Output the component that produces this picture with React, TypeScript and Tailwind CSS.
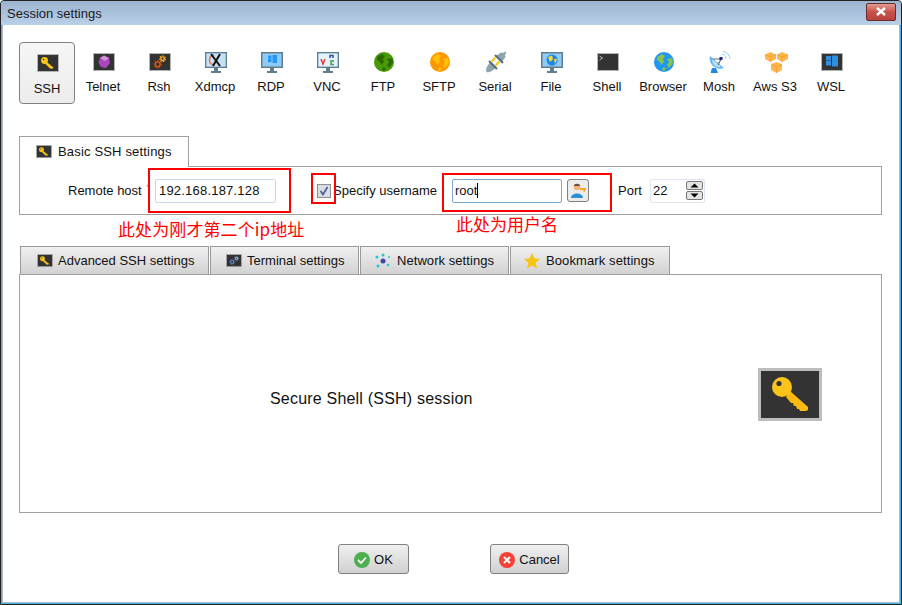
import type { ReactNode } from "react";

const FONT = "font-['Liberation_Sans',Arial,sans-serif]";

function Tile({ size = 22, children }: { size?: number; children: ReactNode }) {
  return (
    <svg width={size} height={size * 0.82} viewBox="0 0 22 18" className="block">
      <rect x="0.5" y="0.5" width="21" height="17" fill="#333" stroke="#b5b5b5" />
      {children}
    </svg>
  );
}

function KeyIcon({ size = 22 }: { size?: number }) {
  return (
    <Tile size={size}>
      <circle cx="7.5" cy="6.5" r="3.4" fill="#fcc419" />
      <circle cx="6.6" cy="5.5" r="0.8" fill="#333" />
      <path d="M9.5 7.8 L16.5 13.5 L15.5 14.8 L13 14.5 L8 9.5 Z" fill="#fcc419" />
    </Tile>
  );
}

function Monitor({ children }: { children?: ReactNode }) {
  return (
    <svg width="22" height="21" viewBox="0 0 22 21" className="block">
      <rect x="0" y="0" width="22" height="16" fill="#607d8b" />
      <rect x="1.5" y="1.5" width="19" height="13" fill="#90caf9" />
      <rect x="9" y="16" width="4" height="3" fill="#607d8b" />
      <rect x="6" y="19" width="10" height="2" fill="#607d8b" />
      {children}
    </svg>
  );
}

function WinLogo({ x, y, s, c }: { x: number; y: number; s: number; c: string }) {
  return (
    <g fill={c}>
      <rect x={x} y={y} width={s} height={s * 0.9} />
      <rect x={x + s + 1} y={y - 0.5} width={s + 1} height={s + 0.4} />
      <rect x={x} y={y + s} width={s} height={s * 0.9} />
      <rect x={x + s + 1} y={y + s} width={s + 1} height={s + 0.4} />
    </g>
  );
}

function Globe({ sea, land }: { sea: string; land: string }) {
  return (
    <svg width="20" height="20" viewBox="0 0 20 20" className="block">
      <circle cx="10" cy="10" r="10" fill={sea} />
      <path d="M3 5 L8 2 L11 4 L9 7 L10 10 L7 13 L6 10 L3 8 Z M13 7 L18 6 L19 11 L15 16 L13 13 L15 10 Z M9 15 L12 16 L10 19 L8 18 Z" fill={land} />
    </svg>
  );
}

function Gear({ cx, cy, r, c }: { cx: number; cy: number; r: number; c: string }) {
  return (
    <g fill="none" stroke={c}>
      <circle cx={cx} cy={cy} r={r} strokeWidth="1.4" />
      <circle cx={cx} cy={cy} r={r + 1.1} strokeWidth="1.1" strokeDasharray="1.3 1.3" />
    </g>
  );
}

const protocols: { name: string; icon: ReactNode }[] = [
  { name: "SSH", icon: <KeyIcon /> },
  {
    name: "Telnet",
    icon: (
      <Tile>
        <path d="M11 2.5 L16 5 L17 10 L13 15 L8 14 L5.5 9.5 L7 5 Z" fill="#ab47bc" />
        <path d="M11 2.5 L16 5 L12 8 L7 5 Z" fill="#ce93d8" />
      </Tile>
    ),
  },
  {
    name: "Rsh",
    icon: (
      <Tile>
        <Gear cx={8.7} cy={11.3} r={2.4} c="#e65100" />
        <Gear cx={13.6} cy={5.7} r={1.8} c="#f9a825" />
      </Tile>
    ),
  },
  {
    name: "Xdmcp",
    icon: (
      <Monitor>
        <rect x="1.5" y="1.5" width="19" height="13" fill="#c5e1f5" />
        <path d="M9 3 C3 4 3 12 9 13" fill="none" stroke="#e5703a" strokeWidth="1.4" />
        <path d="M6 2 L15 14 M15 2 L8 14" stroke="#111" strokeWidth="2" />
      </Monitor>
    ),
  },
  {
    name: "RDP",
    icon: (
      <Monitor>
        <WinLogo x={7} y={3.5} s={3.5} c="#2196f3" />
      </Monitor>
    ),
  },
  {
    name: "VNC",
    icon: (
      <Monitor>
        <rect x="1.5" y="1.5" width="19" height="13" fill="#e3f2fd" />
        <path d="M4 7 L6 12 L8 7" fill="none" stroke="#e53935" strokeWidth="1.5" />
        <path d="M13 6 V3.5 H16 V6" fill="none" stroke="#3949ab" strokeWidth="1.5" />
        <path d="M17 9 H14 V12.5 H17" fill="none" stroke="#43a047" strokeWidth="1.5" />
      </Monitor>
    ),
  },
  { name: "FTP", icon: <Globe sea="#4a9a05" land="#2c6a00" /> },
  { name: "SFTP", icon: <Globe sea="#ff9800" land="#ffc107" /> },
  {
    name: "Serial",
    icon: (
      <svg width="22" height="22" viewBox="0 0 22 22" className="block">
        <path d="M11 5 L16 1.5 L18 2 L20.5 0.5 L21.5 1.5 L20 4 L20.5 6 L17 11 Z" fill="#90a4ae" />
        <path d="M5 11 L11 17 L6 20.5 L2.5 21.5 L1 20 L1.5 16.5 Z" fill="#90a4ae" />
        <path d="M10 4 L18 12 M4 10 L12 18" stroke="#546e7a" strokeWidth="2" />
        <path d="M10.5 6.5 L6.5 10.5 M14.5 10.5 L10.5 14.5" stroke="#ffc107" strokeWidth="1.8" />
      </svg>
    ),
  },
  {
    name: "File",
    icon: (
      <Monitor>
        <circle cx="11" cy="8" r="5.5" fill="#1e88e5" />
        <path d="M7 5 L11 3.5 L12 7 L9 10 Z M13 7 L16 7 L14 12 Z" fill="#fdd835" />
      </Monitor>
    ),
  },
  {
    name: "Shell",
    icon: (
      <Tile>
        <path d="M2.5 3 L5.5 5 L2.5 7" fill="none" stroke="#ddd" strokeWidth="0.8" />
      </Tile>
    ),
  },
  { name: "Browser", icon: <Globe sea="#2196f3" land="#8bc34a" /> },
  {
    name: "Mosh",
    icon: (
      <svg width="22" height="22" viewBox="0 0 22 22" className="block">
        <path d="M1 5 C-1 12 6 20 15 17 Z" fill="#64b5f6" />
        <path d="M3 7.5 L12 16 C7 17 2.5 13 3 7.5 Z" fill="#bbdefb" />
        <path d="M3 17 L1.5 22 H9 L7 17 Z" fill="#1e88e5" />
        <path d="M3.5 8 L12 8 L9 14" fill="none" stroke="#546e7a" strokeWidth="1.2" />
        <rect x="10.5" y="6" width="3" height="3" fill="#1a237e" />
        <path d="M13 3 C15 3.5 16.5 5 17 7.5 M14 0.5 C18 1 20.5 4 21 8" fill="none" stroke="#90caf9" strokeWidth="1" />
      </svg>
    ),
  },
  {
    name: "Aws S3",
    icon: (
      <svg width="23" height="21" viewBox="0 0 23 21" className="block">
        <path d="M5.5 0 L11 2.5 V7 L5.5 10 L0 7 V2.5 Z" fill="#ffb74d" />
        <path d="M17 0 L23 2.5 V7 L17 10 L12 7 V2.5 Z" fill="#ffb74d" />
        <path d="M11.5 10 L17 12 V18 L11.5 21 L6 18 V12 Z" fill="#ffb74d" />
        <path d="M0 2.5 L5.5 5 L11 2.5 M12 2.5 L17 5 L23 2.5 M6 12 L11.5 15 L17 12 M5.5 5 V10 M17 5 V10 M11.5 15 V21" fill="none" stroke="#f59a23" strokeWidth="0.7" />
      </svg>
    ),
  },
  {
    name: "WSL",
    icon: (
      <Tile>
        <WinLogo x={5} y={3} s={5} c="#2f8fe0" />
      </Tile>
    ),
  },
];

function Tab({ className, icon, label }: { className: string; icon: ReactNode; label: string }) {
  return (
    <div className={`flex items-center border border-b-0 text-[13px] text-[#111] ${className}`}>
      {icon}
      <span>{label}</span>
    </div>
  );
}

function SmallKey() {
  return <KeyIcon size={16} />;
}

function SpinArrow({ up }: { up?: boolean }) {
  return (
    <div className="w-[17px] h-[9px] rounded-[2px] border border-[#777] bg-[#e4e4e4] flex items-center justify-center">
      <svg width="9" height="5" viewBox="0 0 9 5">
        <path d={up ? "M0.5 4.5 L4.5 0.5 L8.5 4.5 Z" : "M0.5 0.5 L4.5 4.5 L8.5 0.5 Z"} fill="#000" />
      </svg>
    </div>
  );
}

const inactiveTab = "h-[28px] mr-px pt-px bg-gradient-to-b from-[#f0f0f0] to-[#d2d2d2] border-[#9a9a9a]";
const dialogButton = "h-[30px] pt-px rounded-[3px] border border-[#808080] bg-gradient-to-b from-[#f0f0f0] to-[#d0d0d0] flex items-center justify-center gap-[4px]";

export default function App() {
  return (
    <div className={`${FONT} relative w-[902px] h-[605px] bg-[#46b4e0] border border-[#222] rounded-t-[4px] overflow-hidden text-[13px] text-[#111]`}>
      {/* title bar */}
      <div className="h-[24px] flex items-center justify-between pl-[6px] pr-[4px] bg-gradient-to-b from-[#9cb3cf] to-[#bad0e8] text-[13px] text-[#1a1a1a]">
        <span className="mt-[2px]">Session settings</span>
        <div className="w-[30px] h-[18px] -mt-[3px] mr-[1px] rounded-[2px] border border-[#6b2b2b] bg-gradient-to-b from-[#e09a90] via-[#c9504a] to-[#b8443e] flex items-center justify-center">
          <svg width="12" height="9" viewBox="0 0 12 9">
            <path d="M2 1 L10 8 M10 1 L2 8" stroke="#fff" strokeWidth="2.4" />
          </svg>
        </div>
      </div>

      <div className="mx-[2px] h-[577px] bg-white shadow-[-1px_1px_0_#a9bccd,1px_1px_0_#a9bccd]">
        {/* protocol toolbar */}
        <div className="flex pl-[16px] pt-[17px] h-[111px]">
          {protocols.map((p, i) => (
            <div
              key={p.name}
              className={
                i === 0
                  ? "w-[56px] h-[62px] shrink-0 flex flex-col items-center rounded-[4px] border border-[#808080] bg-gradient-to-b from-[#f6f6f6] to-[#ececec]"
                  : "w-[56px] h-[62px] shrink-0 flex flex-col items-center"
              }
            >
              <div className="h-[22px] mt-[9px] pl-[2px] flex items-center justify-center">{p.icon}</div>
              <span className={i === 0 ? "mt-[5px]" : "mt-[4px]"}>{p.name}</span>
            </div>
          ))}
        </div>

        {/* basic settings */}
        <div className="pl-[16px] pr-[17px]">
          <div className="relative z-10 -mb-px w-[170px]">
            <Tab
              className="w-[170px] h-[31px] pl-[16px] gap-[6px] bg-white border-[#a0a0a0] tracking-[0.17px]"
              icon={<SmallKey />}
              label="Basic SSH settings"
            />
          </div>
          <div className="h-[49px] border border-[#a0a0a0] flex items-center pl-[48px]">
            <span className="w-[87px] shrink-0 whitespace-nowrap">
              Remote host <span className="ml-[1px] text-[9px] text-[#999] align-top">*</span>
            </span>
            <input
              readOnly
              value="192.168.187.128"
              className="w-[121px] h-[24px] shrink-0 border border-[#c8d8e8] rounded-[2px] px-[3px] outline-none text-[13px] tracking-[0.2px]"
            />
            <div className="ml-[41px] w-[14px] h-[14px] shrink-0 border border-[#8e8f8f] bg-[#d8dde6] flex items-center justify-center">
              <svg width="10" height="10" viewBox="0 0 10 10">
                <path d="M1.5 5 L4 8.5 L8.5 1" fill="none" stroke="#4a5a96" strokeWidth="1.6" />
              </svg>
            </div>
            <span className="ml-[2px] w-[119px] shrink-0">Specify username</span>
            <div className="w-[110px] h-[24px] shrink-0 border border-[#7aa7cf] rounded-[2px] px-[2px] flex items-center">
              root<span className="inline-block w-px h-[15px] bg-black" />
            </div>
            <div className="ml-[5px] w-[22px] h-[23px] shrink-0 rounded-[3px] border border-[#808080] bg-[#ececec] flex items-center justify-center">
              <svg width="17" height="17" viewBox="0 0 17 17">
                <circle cx="7" cy="5" r="3.2" fill="#f0b27a" />
                <path d="M3.8 4 C4 1 10 1 10.2 4 Z" fill="#6d4c41" />
                <path d="M1 16 C1 10 13 10 13 16 Z" fill="#2a8fd8" />
                <path d="M10 6 H16 V8 H15 V10 H13.5 V8 H10 Z" fill="#f5a623" />
              </svg>
            </div>
            <span className="ml-[29px] w-[32px] shrink-0">Port</span>
            <div className="w-[55px] h-[24px] shrink-0 border border-[#dde6ee] rounded-[2px] pl-[2px] flex items-center justify-between pr-[1px]">
              <span>22</span>
              <div className="flex flex-col gap-[1px]">
                <SpinArrow up />
                <SpinArrow />
              </div>
            </div>
          </div>
        </div>

        {/* advanced tabs */}
        <div className="pl-[16px] pr-[17px] mt-[31px]">
          <div className="flex pl-[1px]">
            <Tab className={`w-[189px] pl-[16px] gap-[5px] ${inactiveTab}`} icon={<SmallKey />} label="Advanced SSH settings" />
            <Tab
              className={`w-[149px] pl-[15px] gap-[5px] ${inactiveTab}`}
              icon={
                <Tile size={16}>
                  <Gear cx={8.5} cy={11} r={2.2} c="#5b8fd6" />
                  <Gear cx={14.5} cy={6} r={1.6} c="#8fb4e8" />
                </Tile>
              }
              label="Terminal settings"
            />
            <Tab
              className={`w-[149px] pl-[14px] gap-[6px] tracking-[0.06px] ${inactiveTab}`}
              icon={
                <svg width="16" height="16" viewBox="0 0 16 16" className="block">
                  <circle cx="8" cy="8" r="2.5" fill="#3949ab" />
                  <g fill="#26c6da">
                    <circle cx="8" cy="2" r="1.5" />
                    <circle cx="2" cy="4" r="1.5" />
                    <circle cx="14" cy="4" r="1" />
                    <circle cx="3" cy="13" r="1.5" />
                    <circle cx="13" cy="12" r="1.3" />
                  </g>
                </svg>
              }
              label="Network settings"
            />
            <Tab
              className={`w-[160px] pl-[13px] gap-[6px] tracking-[0.1px] ${inactiveTab}`}
              icon={
                <svg width="16" height="16" viewBox="0 0 16 16" className="block">
                  <path d="M8 0 L10.3 5.3 L16 5.9 L11.7 9.7 L13 15.5 L8 12.5 L3 15.5 L4.3 9.7 L0 5.9 L5.7 5.3 Z" fill="#f7c315" />
                </svg>
              }
              label="Bookmark settings"
            />
          </div>
          <div className="h-[239px] border border-[#a0a0a0] flex items-center pl-[250px] pr-[59px] justify-between">
            <span className="mt-[11px] text-[16px] tracking-[0.2px] text-[#111]">Secure Shell (SSH) session</span>
            <svg width="64" height="53" viewBox="0 0 64 53" className="block mt-[1px]">
              <rect x="1.5" y="1.5" width="61" height="50" fill="#333" stroke="#bdbdbd" strokeWidth="3" />
              <path d="M32 23 L50 39 L50 42 L48 43 L42 43 L41 41 L39 41 L38 38 L36 38 L35 35 L33 35 L28 29 Z" fill="#fcb813" />
              <circle cx="24" cy="19" r="10" fill="#fcc419" />
              <circle cx="21" cy="15.5" r="2.6" fill="#333" />
            </svg>
          </div>
        </div>

        {/* dialog buttons */}
        <div className="flex pl-[335px] mt-[31px]">
          <div className={`w-[71px] ${dialogButton}`}>
            <svg width="16" height="16" viewBox="0 0 16 16">
              <circle cx="8" cy="8" r="8" fill="#4caf50" />
              <path d="M4 8 L7 11 L12 5.5" fill="none" stroke="#fff" strokeWidth="1.8" />
            </svg>
            OK
          </div>
          <div className={`ml-[81px] w-[79px] ${dialogButton}`}>
            <svg width="16" height="16" viewBox="0 0 16 16">
              <circle cx="8" cy="8" r="8" fill="#f44336" />
              <path d="M5 5 L11 11 M11 5 L5 11" stroke="#fff" strokeWidth="2" />
            </svg>
            Cancel
          </div>
        </div>
      </div>

      {/* red annotations drawn on top of the dialog */}
      <div className="absolute left-[147px] top-[167px] w-[143px] h-[45px] border-2 border-[#ff0000]" />
      <div className="absolute left-[310px] top-[172px] w-[25px] h-[31px] border-2 border-[#ff0000]" />
      <div className="absolute left-[441px] top-[172px] w-[170px] h-[39px] border-2 border-[#ff0000]" />
      <span className="absolute left-[117px] top-[218px] text-[17px] leading-[20px] tracking-[0.1px] text-[#ff0000] font-['Noto_Sans_CJK_SC',sans-serif]">此处为刚才第二个ip地址</span>
      <span className="absolute left-[455px] top-[213px] text-[17px] leading-[20px] text-[#ff0000] font-['Noto_Sans_CJK_SC',sans-serif]">此处为用户名</span>
    </div>
  );
}
